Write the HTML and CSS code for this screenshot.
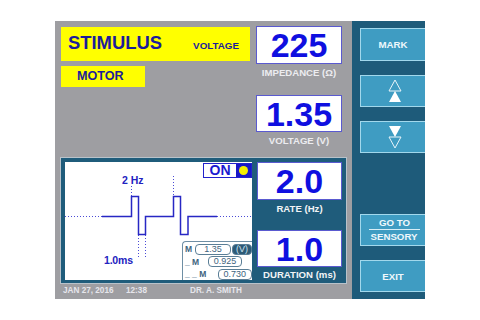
FILE: index.html
```html
<!DOCTYPE html>
<html>
<head>
<meta charset="utf-8">
<link rel="stylesheet" href="styles.css">
</head>
<body>
<div class="screen">
  <div class="main">
    <div class="top">
      <div class="tags">
        <div class="stim"><span class="stim-title">STIMULUS</span><span class="stim-mode">VOLTAGE</span></div>
        <div class="motor">MOTOR</div>
      </div>
      <div class="readouts">
        <div class="val">225</div>
        <div class="lbl lbl-a">IMPEDANCE (Ω)</div>
        <div class="val val-b">1.35</div>
        <div class="lbl">VOLTAGE (V)</div>
      </div>
    </div>
    <div class="panel">
      <div class="graph">
        <svg class="wave" width="187" height="118" viewBox="0 0 187 118">
          <g stroke="#4b4bd6" stroke-width="1" stroke-dasharray="1 2" fill="none">
            <line x1="0" y1="54.5" x2="37" y2="54.5"/>
            <line x1="152" y1="54.5" x2="187" y2="54.5"/>
            <line x1="66.5" y1="24" x2="66.5" y2="34"/>
            <line x1="108.5" y1="14" x2="108.5" y2="34"/>
            <line x1="73.5" y1="73" x2="73.5" y2="97"/>
            <line x1="80.5" y1="73" x2="80.5" y2="97"/>
          </g>
          <polyline fill="none" stroke="#2727c4" stroke-width="1.5"
            points="37,54.5 66.5,54.5 66.5,34.5 73.5,34.5 73.5,72.5 80.5,72.5 80.5,54.5 108.5,54.5 108.5,34.5 115.5,34.5 115.5,72.5 123,72.5 123,54.5 152,54.5"/>
        </svg>
        <span class="hz">2 Hz</span>
        <span class="ms">1.0ms</span>
        <div class="on"><span class="on-text">ON</span><span class="on-lamp"><span class="dot"></span></span></div>
        <div class="legend">
          <div class="lrow"><span class="lm w1">M</span><span class="pill p1">1.35</span><span class="unit">(V)</span></div>
          <div class="lrow"><span class="lm w2">_ M</span><span class="pill p2">0.925</span></div>
          <div class="lrow"><span class="lm w3">_ _ M</span><span class="pill p3">0.730</span></div>
        </div>
      </div>
      <div class="readouts2">
        <div class="val">2.0</div>
        <div class="lbl lbl-c">RATE (Hz)</div>
        <div class="val val-b">1.0</div>
        <div class="lbl lbl-d">DURATION (ms)</div>
      </div>
    </div>
    <div class="footer">
      <span class="date">JAN 27, 2016</span>
      <span class="time">12:38</span>
      <span class="doc">DR. A. SMITH</span>
    </div>
  </div>
  <div class="side">
    <div class="btn">MARK</div>
    <div class="btn btn-arrows">
      <svg width="14" height="24" viewBox="0 0 14 24">
        <polygon points="7,1 13,12 1,12" fill="none" stroke="#e8f4fa" stroke-width="1"/>
        <polygon points="7,12 13,23 1,23" fill="#ffffff"/>
      </svg>
    </div>
    <div class="btn btn-arrows">
      <svg width="14" height="24" viewBox="0 0 14 24">
        <polygon points="1,1 13,1 7,12" fill="#ffffff"/>
        <polygon points="1,12 13,12 7,23" fill="none" stroke="#e8f4fa" stroke-width="1"/>
      </svg>
    </div>
    <div class="btn btn-goto"><span class="goto-a">GO TO</span><span class="goto-b">SENSORY</span></div>
    <div class="btn btn-exit">EXIT</div>
  </div>
</div>
</body>
</html>
```

FILE: styles.css
```css
html, body {
  margin: 0;
  padding: 0;
  background: #ffffff;
}
body {
  font-family: "Liberation Sans", Arial, sans-serif;
  width: 480px;
  height: 320px;
  overflow: hidden;
}
.screen {
  display: flex;
  margin: 21px 0 0 55px;
  width: 370px;
  height: 278px;
}
.main {
  width: 297px;
  height: 278px;
  background: #9e9ea2;
  padding-top: 5px;
  box-sizing: border-box;
  display: flex;
  flex-direction: column;
}
.top {
  display: flex;
  padding-left: 6px;
  height: 124px;
}
.tags {
  width: 189px;
  margin-top: 1px;
}
.stim {
  height: 34px;
  box-sizing: border-box;
  background: #ffff00;
  display: flex;
  align-items: baseline;
  justify-content: space-between;
  padding: 7px 11px 0 7px;
  color: #1c1c9c;
  font-weight: bold;
}
.stim-title {
  font-size: 18.4px;
  line-height: 18px;
}
.stim-mode {
  font-size: 9.8px;
  line-height: 10px;
}
.motor {
  margin-top: 5px;
  width: 84px;
  height: 21px;
  background: #ffff00;
  color: #1c1c9c;
  font-weight: bold;
  font-size: 12.6px;
  line-height: 21px;
  padding-left: 16px;
  box-sizing: border-box;
}
.readouts {
  width: 86px;
  margin-left: 6px;
}
.val {
  height: 38px;
  box-sizing: border-box;
  background: #ffffff;
  border: 1px solid #5a5ad0;
  color: #0f0fe0;
  font-weight: bold;
  font-size: 34px;
  line-height: 37px;
  text-align: center;
}
.val-b {
  height: 37px;
  line-height: 36px;
}
.lbl {
  height: 18px;
  line-height: 18px;
  font-size: 9.6px;
  font-weight: bold;
  color: #ececf0;
  text-align: center;
}
.lbl-a {
  height: 31px;
}
.panel {
  margin: 7px 0 0 5px;
  width: 287px;
  height: 127px;
  box-sizing: border-box;
  border: 1px solid #b8c2ca;
  background: #1f5c7b;
  padding: 4px 4px 3px 4px;
  display: flex;
}
.graph {
  position: relative;
  width: 187px;
  height: 118px;
  background: #ffffff;
}
.wave {
  display: block;
}
.hz, .ms {
  position: absolute;
  color: #2222c0;
  font-weight: bold;
  font-size: 10.5px;
  line-height: 12px;
}
.hz {
  left: 57px;
  top: 12px;
}
.ms {
  left: 39px;
  top: 92px;
  letter-spacing: -0.2px;
}
.on {
  position: absolute;
  left: 138px;
  top: 1px;
  width: 49px;
  height: 15px;
  box-sizing: border-box;
  border: 1px solid #2222cc;
  display: flex;
  background: #ffffff;
}
.on-text {
  flex: 1;
  text-align: center;
  color: #1a1ad0;
  font-weight: bold;
  font-size: 14px;
  line-height: 13px;
}
.on-lamp {
  width: 15px;
  background: #1818c8;
  display: flex;
  align-items: center;
  justify-content: center;
}
.dot {
  width: 9px;
  height: 9px;
  border-radius: 50%;
  background: #f4f000;
}
.legend {
  position: absolute;
  left: 117px;
  top: 79px;
  width: 70px;
  height: 39px;
  box-sizing: border-box;
  border: 1px solid #6e8ea4;
  border-right: none;
  border-bottom: none;
  border-radius: 4px 0 0 0;
  background: #ffffff;
  padding-top: 1px;
}
.lrow {
  display: flex;
  align-items: center;
  height: 12.5px;
  padding-left: 2px;
}
.lm {
  font-size: 8.5px;
  font-weight: bold;
  color: #3e6480;
  white-space: pre;
}
.w1 { width: 10px; }
.w2 { width: 23px; }
.w3 { width: 33px; }
.pill {
  height: 11px;
  box-sizing: border-box;
  border: 1px solid #5a7e96;
  border-radius: 4px;
  font-size: 9px;
  line-height: 9px;
  color: #3e6480;
  text-align: center;
}
.p1 { width: 36px; }
.p2 { width: 34px; }
.p3 { width: 35px; }
.unit {
  width: 20px;
  height: 11px;
  margin-left: 1px;
  box-sizing: border-box;
  border: 1px solid #5a7e96;
  border-radius: 4px;
  background: #2d5a76;
  color: #cfe4f2;
  font-size: 9px;
  line-height: 9px;
  text-align: center;
}
.readouts2 {
  width: 85px;
  margin-left: 5px;
}
.lbl-c {
  height: 30px;
  line-height: 18px;
  color: #f2f4f6;
}
.lbl-d {
  height: 16px;
  line-height: 16px;
  color: #f2f4f6;
}
.footer {
  display: flex;
  height: 15px;
  line-height: 14px;
  padding-left: 8px;
  font-size: 8.2px;
  font-weight: bold;
  color: #e6e6ec;
}
.date { width: 63px; }
.time { width: 64px; }
.side {
  width: 73px;
  height: 278px;
  background: #1e5b7a;
  box-sizing: border-box;
  padding: 7px 0 7px 8px;
  display: flex;
  flex-direction: column;
}
.btn {
  height: 32px;
  box-sizing: border-box;
  background: #3f9cc2;
  border: 1px solid #a2d8ec;
  border-right: none;
  color: #eef8fc;
  font-weight: bold;
  font-size: 9.7px;
  display: flex;
  align-items: center;
  justify-content: center;
  margin-bottom: 14px;
}
.btn:first-child {
  height: 33px;
}
.btn-arrows svg {
  display: block;
  margin-left: 3px;
}
.btn-goto {
  margin-top: auto;
  flex-direction: column;
}
.goto-a {
  line-height: 12px;
  width: 51px;
  text-align: center;
  border-bottom: 1px solid #d8eef6;
  margin-left: 3px;
}
.goto-b {
  line-height: 13px;
  margin-left: 2px;
}
.btn-exit {
  margin-bottom: 0;
}
```
